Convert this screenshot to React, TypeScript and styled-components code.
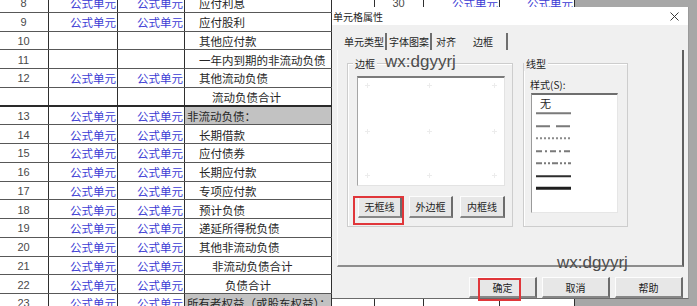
import styled, { createGlobalStyle } from 'styled-components'

const GlobalStyle = createGlobalStyle`
    html, body {
        margin: 0;
        padding: 0;
    }
    body {
        background: #a7a7a7;
        font-family: "Liberation Sans", "Noto Sans CJK SC", sans-serif;
        overflow: hidden;
    }
`

const Screen = styled.div`
    position: relative;
    width: 697px;
    height: 306px;
    overflow: hidden;
    background: #a7a7a7;
`

/* ---------- spreadsheet behind the dialog ---------- */

const Sheet = styled.div`
    width: 575px;
    margin-top: -6px;
    background: #fff;
`

const SheetRow = styled.div<{ $rule?: boolean }>`
    display: grid;
    grid-template-columns: 49px 69px 67px 147px 43px 49px 76px 75px;
    height: 18.75px;
    box-sizing: border-box;
    border-bottom: ${(p) => (p.$rule ? '2px solid #2a2a2a' : '1px solid #585858')};
`

const Cell = styled.div<{ $align?: 'left' | 'center' | 'right'; $indent?: number; $tone?: 'num' | 'formula' | 'label'; $shaded?: boolean }>`
    display: flex;
    align-items: center;
    justify-content: ${(p) => (p.$align === 'center' ? 'center' : p.$align === 'right' ? 'flex-end' : 'flex-start')};
    box-sizing: border-box;
    padding: 1px 1px 0 ${(p) => p.$indent ?? 0}px;
    border-right: 1px solid #2f2f2f;
    background: ${(p) => (p.$shaded ? '#c2c2c2' : '#fff')};
    font-size: ${(p) => (p.$tone === 'num' ? '11px' : '11.5px')};
    color: ${(p) => (p.$tone === 'formula' ? '#3b3bd4' : p.$tone === 'num' ? '#4a4a4a' : '#262626')};
    white-space: nowrap;
    overflow: hidden;
`

/* ---------- dialog ---------- */

const Dialog = styled.div`
    position: absolute;
    left: 332px;
    top: 7px;
    width: 357px;
    height: 292px;
    box-sizing: border-box;
    display: flex;
    flex-direction: column;
    background: #f0f0f0;
    border-right: 1px solid #9a9a9a;
    border-bottom: 1px solid #6b6b6b;
    font-family: "Noto Sans CJK SC", "Liberation Sans", sans-serif;
    font-size: 10px;
    color: #1e1e1e;
`

const TitleBar = styled.div`
    height: 18px;
    flex: none;
    display: flex;
    align-items: center;
    justify-content: space-between;
    padding: 1px 9px 0 1px;
    box-sizing: border-box;
    background: #fff;
    line-height: 17px;
`

const Tabs = styled.div`
    height: 25px;
    flex: none;
    display: flex;
    box-sizing: border-box;
    padding: 8px 0 0 7px;
`

const Tab = styled.div<{ $w: number; $pl: number; $sep?: boolean }>`
    width: ${(p) => p.$w}px;
    height: 17px;
    box-sizing: border-box;
    padding-left: ${(p) => p.$pl}px;
    line-height: 17px;
    white-space: nowrap;
    border-right: ${(p) => (p.$sep ? '2px solid #6f6f6f' : 'none')};
`

const Panel = styled.div`
    margin-left: 5px;
    width: 347px;
    height: 217px;
    flex: none;
    box-sizing: border-box;
    display: flex;
    align-items: flex-start;
    gap: 10px;
    padding: 13px 0 0 9px;
    border-left: 1px solid #fafafa;
    border-right: 2px solid #5f5f5f;
    border-bottom: 2px solid #8d8d8d;
`

const Group = styled.div<{ $w: number }>`
    width: ${(p) => p.$w}px;
    height: 164px;
    box-sizing: border-box;
    border: 1px solid #cdcdcd;
    box-shadow: inset 1px 1px 0 #fff;
`

const Legend = styled.div<{ $offset: number }>`
    width: fit-content;
    margin: -7px 0 0 ${(p) => p.$offset}px;
    padding: 0 2px;
    line-height: 14px;
    background: #f0f0f0;
`

const Preview = styled.div`
    width: 148px;
    height: 110px;
    margin: 5px 0 0 9px;
    box-sizing: border-box;
    background: #fff;
    border-top: 2px solid #7b7b7b;
    border-left: 1px solid #a5a5a5;
    border-right: 1px solid #e3e3e3;
    border-bottom: 1px solid #e3e3e3;
`

const ButtonRow = styled.div`
    display: flex;
    gap: 7px;
    margin: 10px 0 0 10px;
`

const PushButton = styled.button<{ $w: number; $h: number }>`
    width: ${(p) => p.$w}px;
    height: ${(p) => p.$h}px;
    box-sizing: border-box;
    padding: 0;
    background: #e7e7e7;
    border: none;
    border-top: 1px solid #fdfdfd;
    border-left: 1px solid #fdfdfd;
    border-right: 2px solid #6c6c6c;
    border-bottom: 2px solid #878787;
    font: inherit;
    color: #222;
`

const FieldLabel = styled.div`
    margin: 7px 0 0 6px;
    line-height: 14px;
`

const ListBox = styled.div`
    width: 87px;
    height: 120px;
    margin: 1px 0 0 7px;
    box-sizing: border-box;
    padding: 2px 0 0 4px;
    background: #fff;
    border-top: 2px solid #6e6e6e;
    border-left: 1px solid #9a9a9a;
    border-right: 1px solid #e6e6e6;
    border-bottom: 1px solid #e6e6e6;
`

const NoneItem = styled.div`
    height: 10px;
    line-height: 12px;
    padding-left: 4px;
    font-size: 11px;
`

const Footer = styled.div`
    display: flex;
    justify-content: flex-end;
    gap: 5px;
    margin-top: 10px;
    padding-right: 5px;
`

/* ---------- overlays: watermarks and red marks ---------- */

const Watermark = styled.div<{ $x: number; $y: number }>`
    position: absolute;
    left: ${(p) => p.$x}px;
    top: ${(p) => p.$y}px;
    font-family: "Liberation Sans", sans-serif;
    font-size: 17px;
    line-height: 17px;
    color: #4d4d4d;
`

const RedBox = styled.div<{ $x: number; $y: number; $w: number; $h: number }>`
    position: absolute;
    left: ${(p) => p.$x}px;
    top: ${(p) => p.$y}px;
    width: ${(p) => p.$w}px;
    height: ${(p) => p.$h}px;
    box-sizing: border-box;
    border: 2px solid #e0363a;
`

type Row = { no: string; f?: boolean; label: string; indent?: number; head?: boolean; rule?: boolean; right?: boolean }

const rows: Row[] = [
    { no: '8', f: true, label: '应付利息', right: true },
    { no: '9', f: true, label: '应付股利' },
    { no: '10', label: '其他应付款' },
    { no: '11', label: '一年内到期的非流动负债' },
    { no: '12', f: true, label: '其他流动负债' },
    { no: '', label: '流动负债合计', indent: 27, rule: true },
    { no: '13', f: true, label: '非流动负债：', head: true },
    { no: '14', f: true, label: '长期借款' },
    { no: '15', f: true, label: '应付债券' },
    { no: '16', f: true, label: '长期应付款' },
    { no: '17', f: true, label: '专项应付款' },
    { no: '18', f: true, label: '预计负债' },
    { no: '19', f: true, label: '递延所得税负债' },
    { no: '20', f: true, label: '其他非流动负债' },
    { no: '21', f: true, label: '非流动负债合计', indent: 27 },
    { no: '22', f: true, label: '负债合计', indent: 40 },
    { no: '23', f: true, label: '所有者权益（或股东权益）：', head: true },
]

const lineStyles: { dash?: string; width: number; color: string }[] = [
    { width: 2, color: '#7a7a7a' },
    { dash: '14 6', width: 2, color: '#7a7a7a' },
    { dash: '2 2', width: 2, color: '#8a8a8a' },
    { dash: '6 3 2 3', width: 2, color: '#7a7a7a' },
    { dash: '6 2 2 2 2 2', width: 2, color: '#7a7a7a' },
    { width: 2, color: '#2e2e2e' },
    { width: 3, color: '#1e1e1e' },
]

const LineSample = ({ dash, width, color }: { dash?: string; width: number; color: string }) => (
    <svg width="35" height="12.5" style={{ display: 'block' }}>
        <line x1="0" y1="6.25" x2="35" y2="6.25" stroke={color} strokeWidth={width} strokeDasharray={dash} />
    </svg>
)

const CloseIcon = () => (
    <svg width="9" height="9" viewBox="0 0 9 9">
        <path d="M0.5 0.5 L8.5 8.5 M8.5 0.5 L0.5 8.5" stroke="#3a3a3a" strokeWidth="1" />
    </svg>
)

// faint guide marks inside the border preview
const PreviewMarks = () => {
    const xs = [9, 71, 136]
    const ys = [7, 53, 97]
    return (
        <svg width="146" height="107" style={{ display: 'block' }}>
            {xs.map((x) =>
                ys.map((y) => (
                    <path key={`${x}-${y}`} d={`M${x - 2} ${y + 0.5} H${x + 3} M${x + 0.5} ${y - 2} V${y + 3}`} stroke="#ececec" strokeWidth="1" />
                )),
            )}
        </svg>
    )
}

const App = () => {
    return (
        <Screen>
            <GlobalStyle />
            <Sheet>
                {rows.map((r, i) => (
                    <SheetRow key={i} $rule={r.rule}>
                        <Cell $align="center" $tone="num">{r.no}</Cell>
                        <Cell $align="right" $tone="formula">{r.f ? '公式单元' : ''}</Cell>
                        <Cell $align="right" $tone="formula">{r.f ? '公式单元' : ''}</Cell>
                        <Cell $tone="label" $indent={r.head ? 2 : r.indent ?? 14} $shaded={r.head}>
                            {r.label}
                        </Cell>
                        <Cell />
                        <Cell $align="center" $tone="num">{r.right ? '30' : ''}</Cell>
                        <Cell $align="right" $tone="formula">{r.right ? '公式单元' : ''}</Cell>
                        <Cell $align="right" $tone="formula">{r.right ? '公式单元' : ''}</Cell>
                    </SheetRow>
                ))}
            </Sheet>

            <Dialog>
                <TitleBar>
                    <span>单元格属性</span>
                    <CloseIcon />
                </TitleBar>
                <Tabs>
                    <Tab $w={48} $pl={5} $sep>单元类型</Tab>
                    <Tab $w={45} $pl={2} $sep>字体图案</Tab>
                    <Tab $w={28} $pl={4}>对齐</Tab>
                    <Tab $w={48} $pl={13} $sep>边框</Tab>
                </Tabs>
                <Panel>
                    <Group $w={166}>
                        <Legend $offset={5}>边框</Legend>
                        <Preview>
                            <PreviewMarks />
                        </Preview>
                        <ButtonRow>
                            <PushButton $w={44} $h={22}>无框线</PushButton>
                            <PushButton $w={44} $h={22}>外边框</PushButton>
                            <PushButton $w={45} $h={22}>内框线</PushButton>
                        </ButtonRow>
                    </Group>
                    <Group $w={105}>
                        <Legend $offset={0}>线型</Legend>
                        <FieldLabel>样式(S):</FieldLabel>
                        <ListBox>
                            <NoneItem>无</NoneItem>
                            {lineStyles.map((s, i) => (
                                <LineSample key={i} {...s} />
                            ))}
                        </ListBox>
                    </Group>
                </Panel>
                <Footer>
                    <PushButton $w={68} $h={21}>确定</PushButton>
                    <PushButton $w={68} $h={21}>取消</PushButton>
                    <PushButton $w={68} $h={21}>帮助</PushButton>
                </Footer>
            </Dialog>

            <Watermark $x={385} $y={53}>wx:dgyyrj</Watermark>
            <Watermark $x={557} $y={254}>wx:dgyyrj</Watermark>
            <RedBox $x={353} $y={196} $w={51} $h={29} />
            <RedBox $x={478} $y={278} $w={43} $h={23} />
        </Screen>
    )
}

export default App
